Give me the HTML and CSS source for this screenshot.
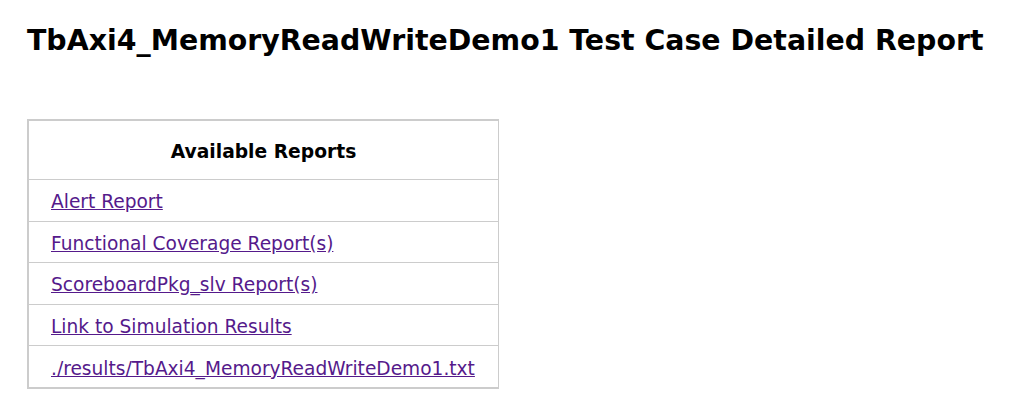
FILE: index.html
```html
<!DOCTYPE html>
<html>
<head>
<meta charset="utf-8">
<title>TbAxi4_MemoryReadWriteDemo1 Test Case Detailed Report</title>
<link rel="stylesheet" href="styles.css">
</head>
<body>
<h1 class="title">TbAxi4_MemoryReadWriteDemo1 Test Case Detailed Report</h1>
<table class="reports">
  <thead>
    <tr><th>Available Reports</th></tr>
  </thead>
  <tbody>
    <tr><td><a href="#alert">Alert Report</a></td></tr>
    <tr><td><a href="#cov">Functional Coverage Report(s)</a></td></tr>
    <tr><td><a href="#sb">ScoreboardPkg_slv Report(s)</a></td></tr>
    <tr><td><a href="#sim">Link to Simulation Results</a></td></tr>
    <tr><td><a href="#txt">./results/TbAxi4_MemoryReadWriteDemo1.txt</a></td></tr>
  </tbody>
</table>
</body>
</html>
```
FILE: styles.css
```css
html, body {
  margin: 0;
  padding: 0;
  background: #ffffff;
}
body {
  padding: 0 27px;
  font-family: "DejaVu Sans", Verdana, sans-serif;
  color: #000;
}
.title {
  margin: 0;
  padding-top: 21px;
  font-size: 28.4px;
  line-height: 40px;
  font-weight: bold;
  white-space: nowrap;
}
.reports {
  margin-top: 58px;
  width: 472px;
  border-collapse: collapse;
  border-left: 2px solid #cccccc;
  border-top: 2px solid #cccccc;
  border-bottom: 2px solid #cccccc;
  border-right: 1px solid #cccccc;
}
.reports th {
  height: 56px;
  padding: 2px 0 0 0;
  font-size: 18.7px;
  font-weight: bold;
  text-align: center;
  border-bottom: 1px solid #cccccc;
}
.reports td {
  height: 37.6px;
  padding: 3px 0 0 22px;
  font-size: 18.6px;
  text-align: left;
  border-bottom: 1px solid #cccccc;
}
.reports a {
  color: #551a8b;
  text-decoration: underline;
}
```
